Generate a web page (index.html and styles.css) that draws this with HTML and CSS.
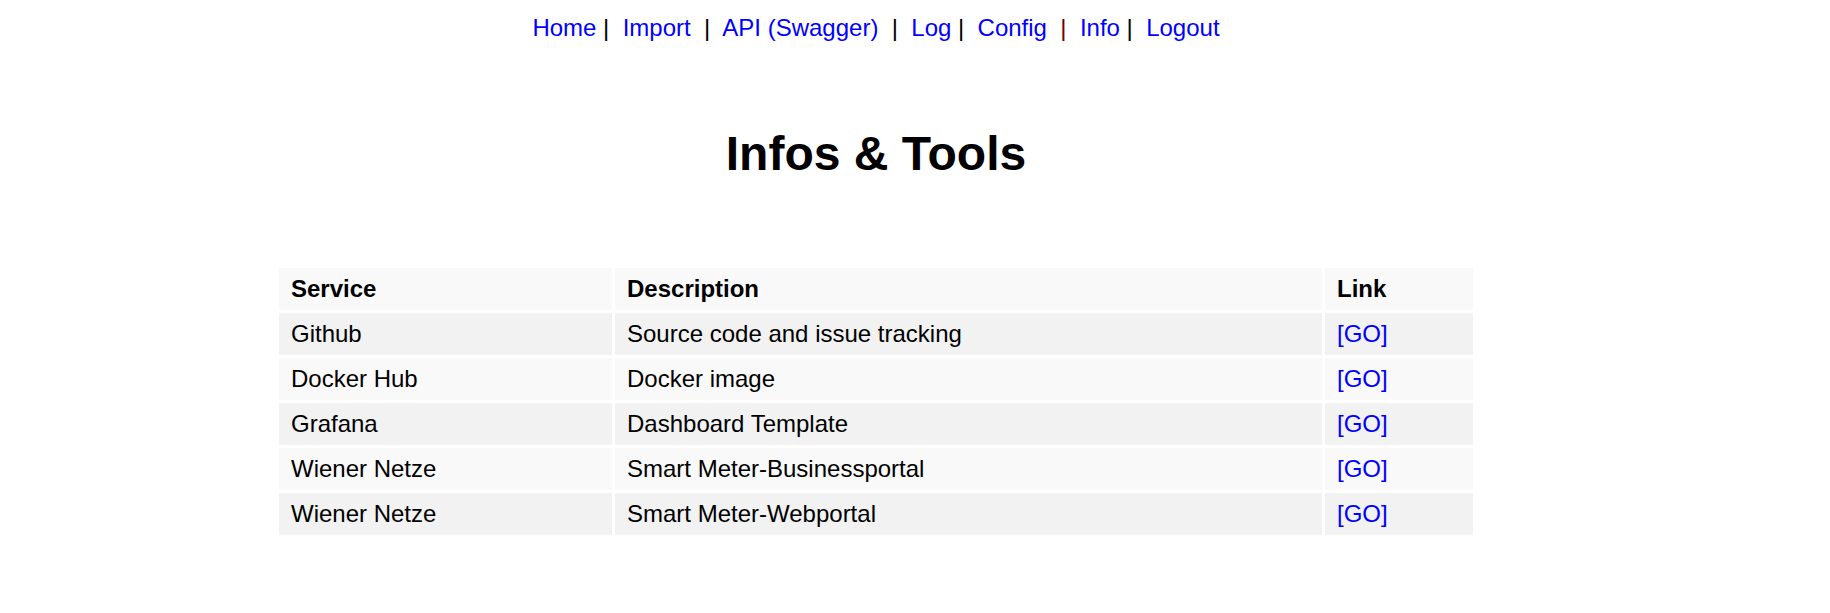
FILE: index.html
```html
<!DOCTYPE html>
<html>
<head>
<meta charset="utf-8">
<title>Infos &amp; Tools</title>
<link rel="stylesheet" href="styles.css">
</head>
<body>
<div class="page">
  <nav class="nav"><a href="#">Home</a> |  <a href="#">Import</a>  |  <a href="#">API (Swagger)</a>  |  <a href="#">Log</a> |  <a href="#">Config</a>  <span class="bar-red">|</span>  <a href="#">Info</a> |  <a href="#">Logout</a></nav>
  <h1 class="title">Infos &amp; Tools</h1>
  <table class="tools">
    <colgroup>
      <col class="c1"><col class="c2"><col class="c3">
    </colgroup>
    <thead>
      <tr><th>Service</th><th>Description</th><th>Link</th></tr>
    </thead>
    <tbody>
      <tr><td>Github</td><td>Source code and issue tracking</td><td><a href="#">[GO]</a></td></tr>
      <tr><td>Docker Hub</td><td>Docker image</td><td><a href="#">[GO]</a></td></tr>
      <tr><td>Grafana</td><td>Dashboard Template</td><td><a href="#">[GO]</a></td></tr>
      <tr><td>Wiener Netze</td><td>Smart Meter-Businessportal</td><td><a href="#">[GO]</a></td></tr>
      <tr><td>Wiener Netze</td><td>Smart Meter-Webportal</td><td><a href="#">[GO]</a></td></tr>
    </tbody>
  </table>
</div>
</body>
</html>
```

FILE: styles.css
```css
html, body {
  margin: 0;
  padding: 0;
  background: #ffffff;
}
body {
  font-family: "Liberation Sans", Arial, sans-serif;
  font-size: 24px;
  color: #000000;
}
a {
  color: #0000ff;
  text-decoration: none;
}
.page {
  width: 1200px;
  margin-left: 276px;
}
.nav {
  text-align: center;
  white-space: pre;
  padding-top: 14px;
  line-height: 27.6px;
}
.bar-red {
  color: #700000;
}
.title {
  text-align: center;
  font-size: 48px;
  font-weight: bold;
  margin: 84px 0 0 0;
  line-height: 55px;
}
.tools {
  margin-top: 84px;
  width: 1200px;
  table-layout: fixed;
  border-collapse: separate;
  border-spacing: 3px;
}
.c1 { width: 333px; }
.c2 { width: 707px; }
.c3 { width: 148px; }
.tools th,
.tools td {
  text-align: left;
  padding: 7px 12px;
  height: 42px;
  box-sizing: border-box;
  line-height: 28px;
  font-size: 24px;
}
.tools th {
  font-weight: bold;
  background: #f9f9f9;
}
.tools tbody tr:nth-child(odd) td {
  background: #f2f2f2;
}
.tools tbody tr:nth-child(even) td {
  background: #f9f9f9;
}
```
